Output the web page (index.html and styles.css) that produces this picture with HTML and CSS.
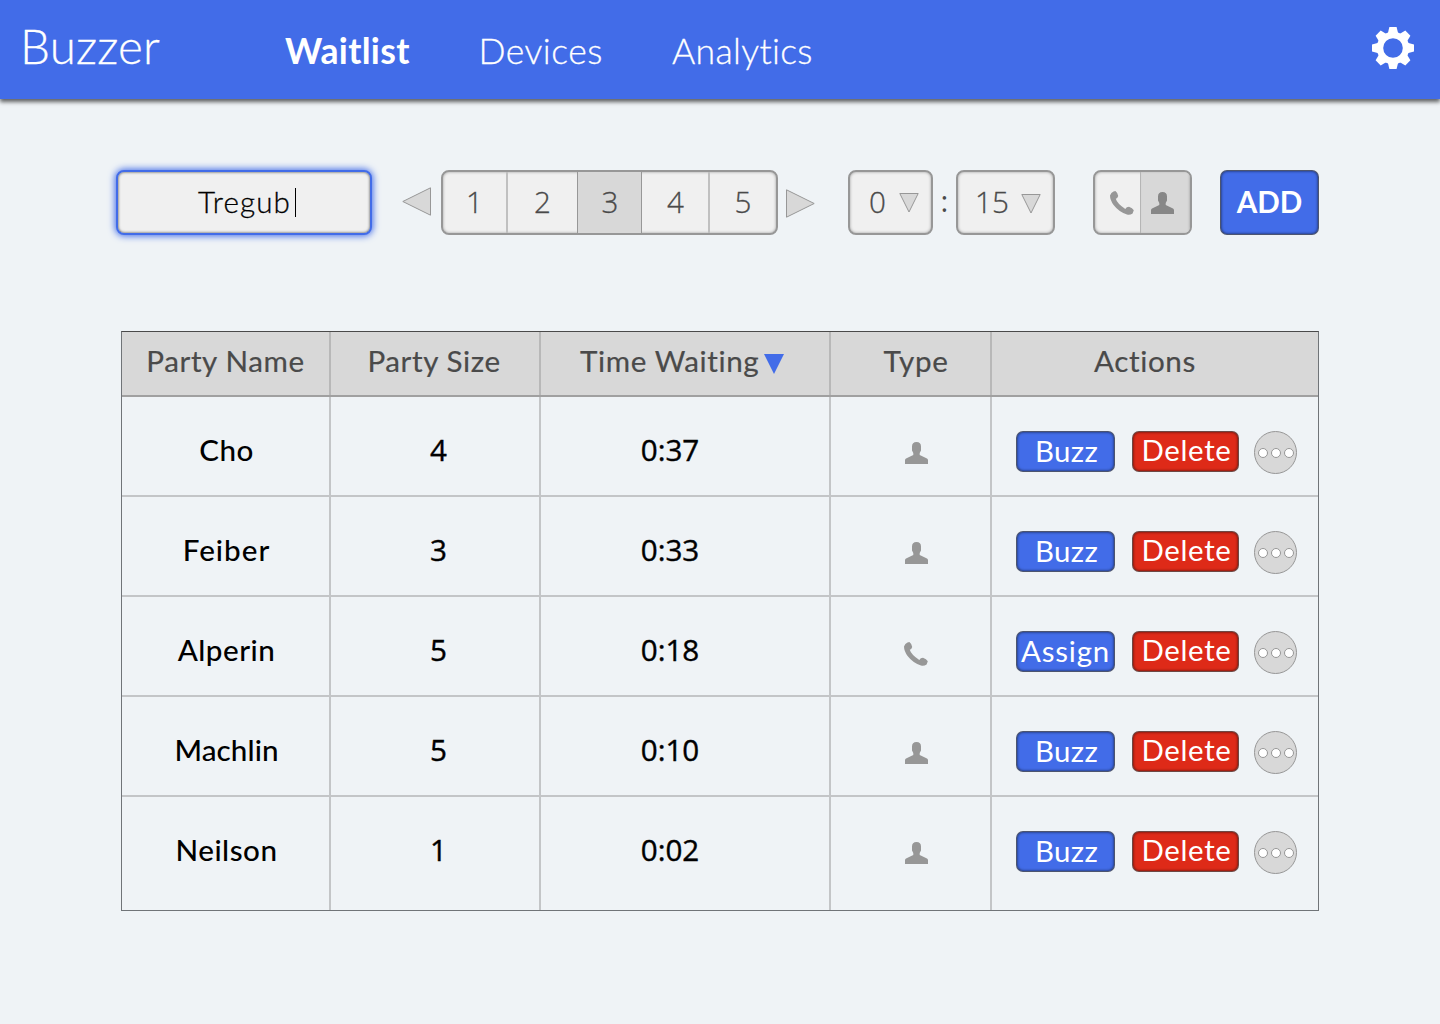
FILE: index.html
```html
<!DOCTYPE html>
<html lang="en">
<head>
<meta charset="utf-8">
<title>Buzzer</title>
<link rel="stylesheet" href="styles.css">
</head>
<body>
<svg class="defs" width="0" height="0">
  <symbol id="person" viewBox="0 0 23 22"><path d="M7 4.6Q7 0 11.5 0Q16 0 16 4.6V8.4L14.7 11V13L22 16.6Q23 17.1 23 18.2V22H0V18.2Q0 17.1 1 16.6L8.3 13V11L7 8.4Z"/></symbol>
  <symbol id="phone" viewBox="0 0 24 24"><path d="M3.5.4L5.4 0Q8 2 8.2 5L7.2 7L5.8 7.8Q7 12.5 15.3 18Q16.5 15.9 19 15.8Q22.5 17 23.8 19.3L22.6 22.5Q20 24.2 17 23.5Q9 21 3.6 14Q0 9 0 4.5Q1 1.5 3.5.4Z"/></symbol>
</svg>
<header class="topbar">
  <div class="brand">Buzzer</div>
  <nav class="nav">
    <a class="nav-item active">Waitlist</a>
    <a class="nav-item devices">Devices</a>
    <a class="nav-item analytics">Analytics</a>
  </nav>
  <svg class="gear" viewBox="-21 -21 42 42">
    <circle r="13" fill="none" stroke="#fff" stroke-width="6.4"/>
    <g fill="#fff">
      <path id="tooth" d="M-3.6 -21H3.6L5.2 -14.5H-5.2Z"/>
      <use href="#tooth" transform="rotate(45)"/><use href="#tooth" transform="rotate(90)"/>
      <use href="#tooth" transform="rotate(135)"/><use href="#tooth" transform="rotate(180)"/>
      <use href="#tooth" transform="rotate(225)"/><use href="#tooth" transform="rotate(270)"/>
      <use href="#tooth" transform="rotate(315)"/>
    </g>
  </svg>
</header>
<main>
  <section class="controls">
    <div class="name-input"><span>Tregub</span><i class="caret"></i></div>
    <svg class="arrow prev" viewBox="0 0 29 29"><path d="M.8 14.5L28.5 .8V28.2Z"/></svg>
    <div class="box sizes">
      <span>1</span><span>2</span><span class="on">3</span><span>4</span><span>5</span>
    </div>
    <svg class="arrow next" viewBox="0 0 29 29"><path d="M28.2 14.5L.5 .8V28.2Z"/></svg>
    <div class="box select hours"><span>0</span><svg viewBox="0 0 20 20"><path d="M.8 .5H19.2L10 19Z"/></svg></div>
    <span class="colon">:</span>
    <div class="box select minutes"><span>15</span><svg viewBox="0 0 20 20"><path d="M.8 .5H19.2L10 19Z"/></svg></div>
    <div class="box kinds">
      <span><svg class="phone"><use href="#phone"/></svg></span>
      <span class="on"><svg class="person"><use href="#person"/></svg></span>
    </div>
    <div class="btn add">ADD</div>
  </section>
  <section class="table">
    <div class="row head">
      <div class="h-name">Party Name</div><div class="h-size">Party Size</div>
      <div class="h-time"><span>Time Waiting</span><svg class="sort" viewBox="0 0 20 20"><path d="M0 0H20L10 20Z"/></svg></div>
      <div class="h-type">Type</div><div class="h-actions">Actions</div>
    </div>
    <div class="row">
      <div class="name">Cho</div><div class="size">4</div><div class="time">0:37</div>
      <div class="type"><svg class="person"><use href="#person"/></svg></div>
      <div class="actions"><span class="btn buzz">Buzz</span><span class="btn delete">Delete</span><span class="more"><i></i><i></i><i></i></span></div>
    </div>
    <div class="row">
      <div class="name wide">Feiber</div><div class="size">3</div><div class="time">0:33</div>
      <div class="type"><svg class="person"><use href="#person"/></svg></div>
      <div class="actions"><span class="btn buzz">Buzz</span><span class="btn delete">Delete</span><span class="more"><i></i><i></i><i></i></span></div>
    </div>
    <div class="row">
      <div class="name">Alperin</div><div class="size">5</div><div class="time">0:18</div>
      <div class="type"><svg class="phone"><use href="#phone"/></svg></div>
      <div class="actions"><span class="btn buzz assign">Assign</span><span class="btn delete">Delete</span><span class="more"><i></i><i></i><i></i></span></div>
    </div>
    <div class="row">
      <div class="name tight">Machlin</div><div class="size">5</div><div class="time">0:10</div>
      <div class="type"><svg class="person"><use href="#person"/></svg></div>
      <div class="actions"><span class="btn buzz">Buzz</span><span class="btn delete">Delete</span><span class="more"><i></i><i></i><i></i></span></div>
    </div>
    <div class="row last">
      <div class="name">Neilson</div><div class="size">1</div><div class="time">0:02</div>
      <div class="type"><svg class="person"><use href="#person"/></svg></div>
      <div class="actions"><span class="btn buzz">Buzz</span><span class="btn delete">Delete</span><span class="more"><i></i><i></i><i></i></span></div>
    </div>
  </section>
</main>
</body>
</html>
```
FILE: styles.css
```css
* { box-sizing: border-box; }
body {
  margin: 0;
  height: 1024px;
  overflow: hidden;
  background: #eff3f6;
  font: 400 29.6px "Lato", sans-serif;
  color: #000;
}
svg { display: block; flex: none; }
.defs { position: absolute; }

.topbar {
  display: flex;
  height: 99px;
  background: #426ce8;
  color: #fff;
  box-shadow: 0 3px 4px rgba(0, 0, 0, .6);
  font-weight: 300;
  -webkit-text-stroke: .3px;
}
.brand { width: 285px; padding-left: 20px; font-size: 47.5px; line-height: 91px; letter-spacing: .2px; }
.nav { display: flex; font-size: 35.6px; line-height: 101px; }
.nav-item { letter-spacing: .5px; }
.nav-item.active { width: 193.5px; font-weight: 700; letter-spacing: .3px; -webkit-text-stroke: 0; }
.nav-item.devices { width: 193.5px; }
.nav-item.analytics { letter-spacing: .35px; }
.gear { width: 42px; height: 42px; margin: 27px 26px 0 auto; }

.controls { display: flex; height: 65px; margin: 71px 0 0 116px; }
.controls .box, .name-input {
  display: flex;
  height: 65px;
  flex: none;
  border: 2px solid #979797;
  border-radius: 8px;
  background: #f0f0f0;
  box-shadow: inset 0 0 3px rgba(0, 0, 0, .35);
  color: #4a4a4a;
  font: 300 29.6px/60px "Open Sans", sans-serif;
  -webkit-text-stroke: .3px;
}
.controls .name-input {
  width: 256px;
  padding-left: 80px;
  border-color: #426ce8;
  box-shadow: 0 0 7px 1px #426ce8, inset 0 0 3px rgba(0, 0, 0, .7);
  color: #000;
  font: 300 29.6px/60px "Lato", sans-serif;
  letter-spacing: 1.1px;
}
.caret { width: 1px; height: 29px; margin: 16px 0 0 4px; background: #000; }
.arrow { width: 29px; height: 29px; fill: #d8d8d8; stroke: #979797; }
.prev { margin: 17px 10px 0 30px; }
.next { margin: 19px 33px 0 8px; }
.sizes { width: 337px; text-align: center; }
.sizes span { width: 65px; border-right: 2px solid #c0c0c0; }
.sizes span:nth-child(2) { width: 70px; border-right: 1px solid #979797; }
.sizes span.on { width: 64px; padding-left: 1px; border-right: 1px solid #979797; }
.sizes span:nth-child(4) { width: 68px; padding-left: 1px; }
.sizes span:last-child { width: 66px; border: 0; }
.on { background: #d8d8d8; }
.select svg { width: 20px; height: 20px; fill: #d8d8d8; stroke: #979797; }
.hours { width: 85px; padding-left: 19px; }
.hours svg { margin: 21px 0 0 13px; }
.minutes { width: 99px; padding-left: 17px; }
.minutes svg { margin: 22px 0 0 12px; }
.colon { width: 23px; text-align: center; font: 400 29.6px/62px "Open Sans", sans-serif; color: #4a4a4a; }
.controls .kinds { width: 99px; margin-left: 38px; overflow: hidden; }
.kinds span { display: flex; width: 46px; border-right: 1px solid #b5b5b5; }
.kinds .on { width: 49px; border: 0; box-shadow: inset -1px 0 2px rgba(0, 0, 0, .15); }
.phone { width: 24px; height: 24px; fill: #979797; }
.person { width: 23px; height: 22px; fill: #979797; }
.kinds .phone { margin: 19px 0 0 15px; }
.kinds .person { margin: 20px 0 0 10px; fill: #878787; }

.btn {
  display: block;
  flex: none;
  border: 1px solid rgba(80, 80, 80, .8);
  border-radius: 7px;
  background: #426ce8;
  box-shadow: inset 0 0 3px rgba(0, 0, 0, .7);
  color: #fff;
  text-align: center;
  white-space: nowrap;
}
.add { width: 99px; margin-left: 28px; font-weight: 700; line-height: 62px; }

.table { width: 1198px; height: 580px; margin: 96px 0 0 121px; border: 1px solid #707478; border-top-color: #4a4a4a; }
.row { display: grid; grid-template-columns: 209px 210px 290px 161px 326px; height: 100px; border-bottom: 2px solid #c3c5c7; }
.row > div { border-right: 2px solid #c3c5c7; text-align: center; line-height: 95px; padding-top: 5px; height: 98px; }
.row > div:last-child { border-right: 0; }
.row.last { height: 113px; border: 0; }
.row.last > div { height: 113px; }
.row.head { height: 65px; background: #d8d8d8; color: #4a4a4a; border-bottom-color: #a0a0a0; }
.row.head > div { height: 63px; padding-top: 0; line-height: 57px; border-color: #b8b8b8; letter-spacing: .6px; -webkit-text-stroke: .2px; }
.row.head .h-size { padding-right: 2px; }
.row.head .h-time { display: flex; padding-left: 39px; }
.sort { width: 20px; height: 20px; margin: 22px 0 0 5px; fill: #426ce8; }
.row.head .h-type { padding-left: 11px; }
.row.head .h-actions { padding-right: 20px; }
.row .name { padding-left: 2px; font-weight: 500; letter-spacing: .5px; }
.row .name.wide { letter-spacing: 1px; }
.row .name.tight { letter-spacing: .1px; }
.row .size, .row .time { font-family: "Open Sans", sans-serif; font-weight: 500; -webkit-text-stroke: .4px; }
.row .size { padding-left: 7px; }
.row .time { padding-right: 30px; }
.row .type { display: flex; padding: 45px 0 0 74px; }
.row .type .phone { margin-left: -1px; }
.row .actions { display: flex; padding: 34px 0 0 24px; }
.actions .btn { height: 41px; line-height: 37px; font-size: 29.4px; }
.actions .buzz { width: 99px; margin-right: 17px; padding-left: 2px; line-height: 38px; letter-spacing: .4px; }
.actions .assign { padding-left: 0; letter-spacing: .8px; }
.actions .delete { width: 107px; margin-right: 15px; padding-left: 2px; line-height: 36px; letter-spacing: .7px; background: #de2a18; }
.more { display: flex; align-items: center; justify-content: center; gap: 3px; width: 43px; height: 43px; border: 1px solid #979797; border-radius: 50%; background: #d8d8d8; }
.more i { width: 10px; height: 10px; border: 1px solid #979797; border-radius: 50%; background: #fff; }
```
